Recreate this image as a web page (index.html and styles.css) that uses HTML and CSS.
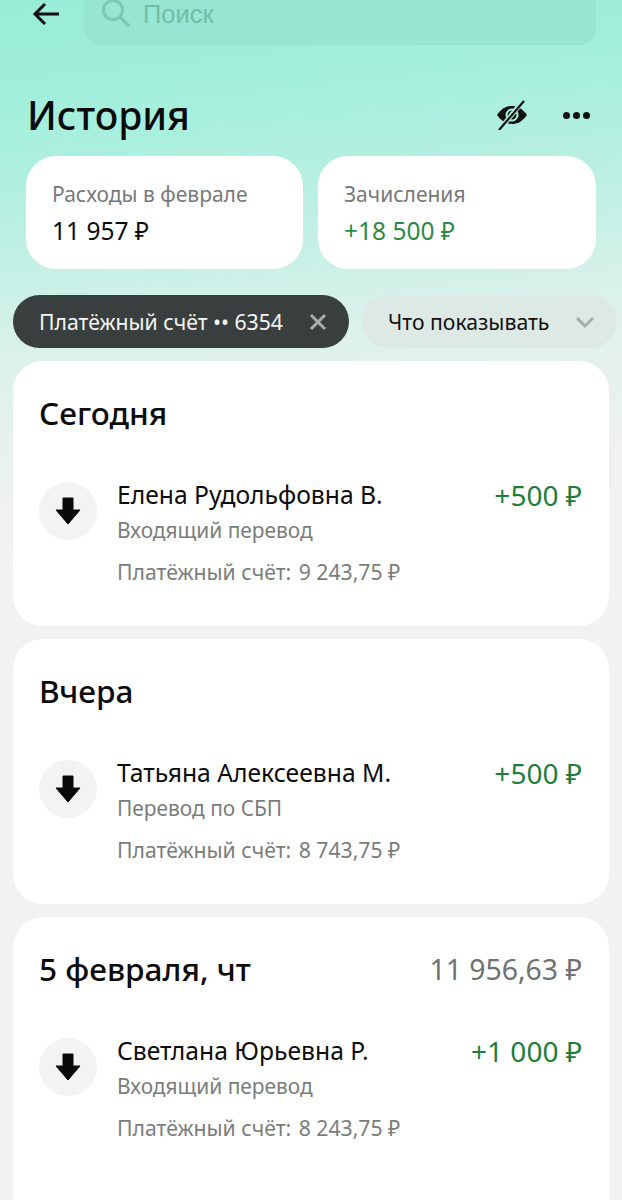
FILE: index.html
```html
<!DOCTYPE html>
<html lang="ru">
<head>
    <meta charset="utf-8"/>
    <title>История</title>
    <link rel="stylesheet" href="styles.css">
</head>
<body>
<div class="page">
    <div class="top">
        <svg class="back" width="30" height="30" viewBox="0 0 30 30"><path d="M28 15H4M14 5L4 15l10 10" fill="none" stroke="#111" stroke-width="3"/></svg>
        <div class="search">
            <svg width="32" height="32" viewBox="0 0 32 32"><circle cx="13" cy="12" r="9.5" fill="none" stroke="#7cc8b2" stroke-width="3"/><path d="M20 19l9 9" stroke="#7cc8b2" stroke-width="3.5"/></svg>
            <span>Поиск</span>
        </div>
    </div>
    <div class="head">
        <h1>История</h1>
        <svg class="eye" width="32" height="30" viewBox="0 0 32 30"><path d="M1 15C6 8 11 6 16 6s10 2 15 9c-5 7-10 9-15 9S6 22 1 15z" fill="#111"/><circle cx="16" cy="15" r="5.5" fill="none" stroke="#aef0df" stroke-width="2"/><path d="M27 1L4 29" stroke="#aef0df" stroke-width="5"/><path d="M28 1L3 30" stroke="#111" stroke-width="2.2"/></svg>
        <div class="dots"><i></i><i></i><i></i></div>
    </div>
    <div class="summary">
        <div class="sum-card">
            <div class="sum-label">Расходы в феврале</div>
            <div class="sum-value">11 957 ₽</div>
        </div>
        <div class="sum-card">
            <div class="sum-label">Зачисления</div>
            <div class="sum-value green">+18 500 ₽</div>
        </div>
    </div>
    <div class="chips">
        <div class="chip dark">
            <span>Платёжный счёт •• 6354</span>
            <svg width="18" height="18" viewBox="0 0 18 18"><path d="M2 2l14 14M16 2L2 16" stroke="#a9adac" stroke-width="3"/></svg>
        </div>
        <div class="chip light">
            <span>Что показывать</span>
            <svg width="20" height="14" viewBox="0 0 20 14"><path d="M2 3l8 8 8-8" fill="none" stroke="#a3aeaa" stroke-width="3"/></svg>
        </div>
    </div>

    <section class="card">
        <div class="day"><h2>Сегодня</h2></div>
        <div class="op">
            <div class="op-icon"><svg width="26" height="28" viewBox="0 0 26 28"><path d="M8 1h10v12h7L13 27 1 13h7z" fill="#0a0a0a" stroke="#0a0a0a" stroke-linejoin="round" stroke-width="1"/></svg></div>
            <div class="op-body">
                <div class="op-name">Елена Рудольфовна В.</div>
                <div class="op-type">Входящий перевод</div>
                <div class="op-balance">Платёжный счёт: <span>9 243,75 ₽</span></div>
            </div>
            <div class="op-sum">+500 ₽</div>
        </div>
    </section>

    <section class="card">
        <div class="day"><h2>Вчера</h2></div>
        <div class="op">
            <div class="op-icon"><svg width="26" height="28" viewBox="0 0 26 28"><path d="M8 1h10v12h7L13 27 1 13h7z" fill="#0a0a0a" stroke="#0a0a0a" stroke-linejoin="round" stroke-width="1"/></svg></div>
            <div class="op-body">
                <div class="op-name">Татьяна Алексеевна М.</div>
                <div class="op-type">Перевод по СБП</div>
                <div class="op-balance">Платёжный счёт: <span>8 743,75 ₽</span></div>
            </div>
            <div class="op-sum">+500 ₽</div>
        </div>
    </section>

    <section class="card">
        <div class="day"><h2>5 февраля, чт</h2><span class="day-sum">11 956,63 ₽</span></div>
        <div class="op">
            <div class="op-icon"><svg width="26" height="28" viewBox="0 0 26 28"><path d="M8 1h10v12h7L13 27 1 13h7z" fill="#0a0a0a" stroke="#0a0a0a" stroke-linejoin="round" stroke-width="1"/></svg></div>
            <div class="op-body">
                <div class="op-name">Светлана Юрьевна Р.</div>
                <div class="op-type">Входящий перевод</div>
                <div class="op-balance">Платёжный счёт: <span>8 243,75 ₽</span></div>
            </div>
            <div class="op-sum">+1 000 ₽</div>
        </div>
    </section>
</div>
</body>
</html>
```

FILE: styles.css
```css
html, body, h1, h2 {
    margin: 0;
    padding: 0;
}

html, body {
    height: 1200px;
    overflow: hidden;
}

body {
    color: #0c0c0c;
    font-family: "Noto Sans", "DejaVu Sans", sans-serif;
    background: #f2f2f2;
}

.page {
    background: linear-gradient(174deg, #98ecd6 0, #a3efdc 110px, #b4efe0 200px, #c7f0e6 280px, #dcf1ea 360px, #e9f1ee 450px, #f2f2f2 570px) no-repeat;
    background-size: 100% 620px;
    height: 1200px;
    overflow: hidden;
}

.top {
    display: flex;
    align-items: flex-start;
    height: 45px;
    padding-left: 31px;
}

.back {
    margin-top: -1px;
    flex: none;
}

.search {
    display: flex;
    align-items: center;
    gap: 11px;
    box-sizing: border-box;
    width: 512px;
    height: 45px;
    margin-left: 23px;
    padding: 0 0 18px 16px;
    background: #97e6d1;
    border-radius: 0 0 16px 16px;
    color: #72bda8;
    font-family: "Liberation Sans", sans-serif;
    font-size: 25.5px;
    line-height: 26px;
}

.head {
    display: flex;
    align-items: center;
    height: 64px;
    margin-top: 38px;
    padding-left: 27px;
    padding-right: 32px;
    box-sizing: border-box;
}

h1 {
    flex: 1;
    font-size: 39px;
    font-weight: 500;
    line-height: 64px;
    color: #0b0b0b;
}

.eye {
    margin-right: 35px;
}

.dots {
    display: flex;
    gap: 3px;
}

.dots i {
    display: block;
    width: 7px;
    height: 7px;
    border-radius: 50%;
    background: #111;
}

.summary {
    display: flex;
    gap: 15px;
    margin-top: 9px;
    padding-left: 26px;
}

.sum-card {
    box-sizing: border-box;
    width: 277px;
    height: 113px;
    padding: 24px 26px 0;
    background: #fff;
    border-radius: 30px;
}

.sum-card + .sum-card {
    width: 278px;
}

.sum-label {
    color: #777a79;
    font-size: 21px;
    line-height: 28px;
}

.sum-value {
    margin-top: 9px;
    font-size: 24.5px;
    line-height: 28px;
}

.green {
    color: #2c8a45;
}

.chips {
    display: flex;
    gap: 13px;
    margin-top: 26px;
    padding-left: 13px;
}

.chip {
    display: flex;
    align-items: center;
    justify-content: space-between;
    box-sizing: border-box;
    height: 53px;
    border-radius: 27px;
    font-size: 21.2px;
}

.chip.dark {
    width: 336px;
    padding: 0 22px 0 26px;
    background: #393f3e;
    color: #f4f6f5;
}

.chip.light {
    width: 255px;
    padding: 0 22px 0 26px;
    background: #dde9e5;
    color: #111;
}

.card {
    box-sizing: border-box;
    width: 596px;
    height: 265px;
    margin: 13px 0 0 13px;
    padding: 0 27px 0 26px;
    background: #fff;
    border-radius: 30px;
}

.card:last-child {
    height: 320px;
}

.day {
    display: flex;
    align-items: center;
    justify-content: space-between;
    box-sizing: border-box;
    height: 106px;
    padding-bottom: 4px;
}

h2 {
    font-size: 31.6px;
    font-weight: 500;
}

.day-sum {
    padding-top: 2px;
    color: #6f7271;
    font-size: 28.4px;
}

.op {
    display: flex;
    align-items: flex-start;
    padding-top: 2px;
}

.op-icon {
    display: flex;
    align-items: center;
    justify-content: center;
    flex: none;
    width: 58px;
    height: 58px;
    margin-top: 13px;
    background: #f3f3f3;
    border-radius: 50%;
}

.op-body {
    flex: 1;
    padding-top: 10px;
    padding-left: 20px;
}

.op-name {
    font-size: 24.7px;
    line-height: 32px;
}

.op-type {
    margin-top: 5px;
    color: #7b7d7c;
    font-size: 20.9px;
    line-height: 28px;
}

.op-balance {
    margin-top: 14px;
    color: #7b7d7c;
    font-size: 21.2px;
    line-height: 28px;
}

.op-balance span {
    margin-left: 2px;
}

.op-sum {
    margin-top: 10px;
    color: #1f7d3a;
    font-size: 28px;
    line-height: 32px;
}
```
